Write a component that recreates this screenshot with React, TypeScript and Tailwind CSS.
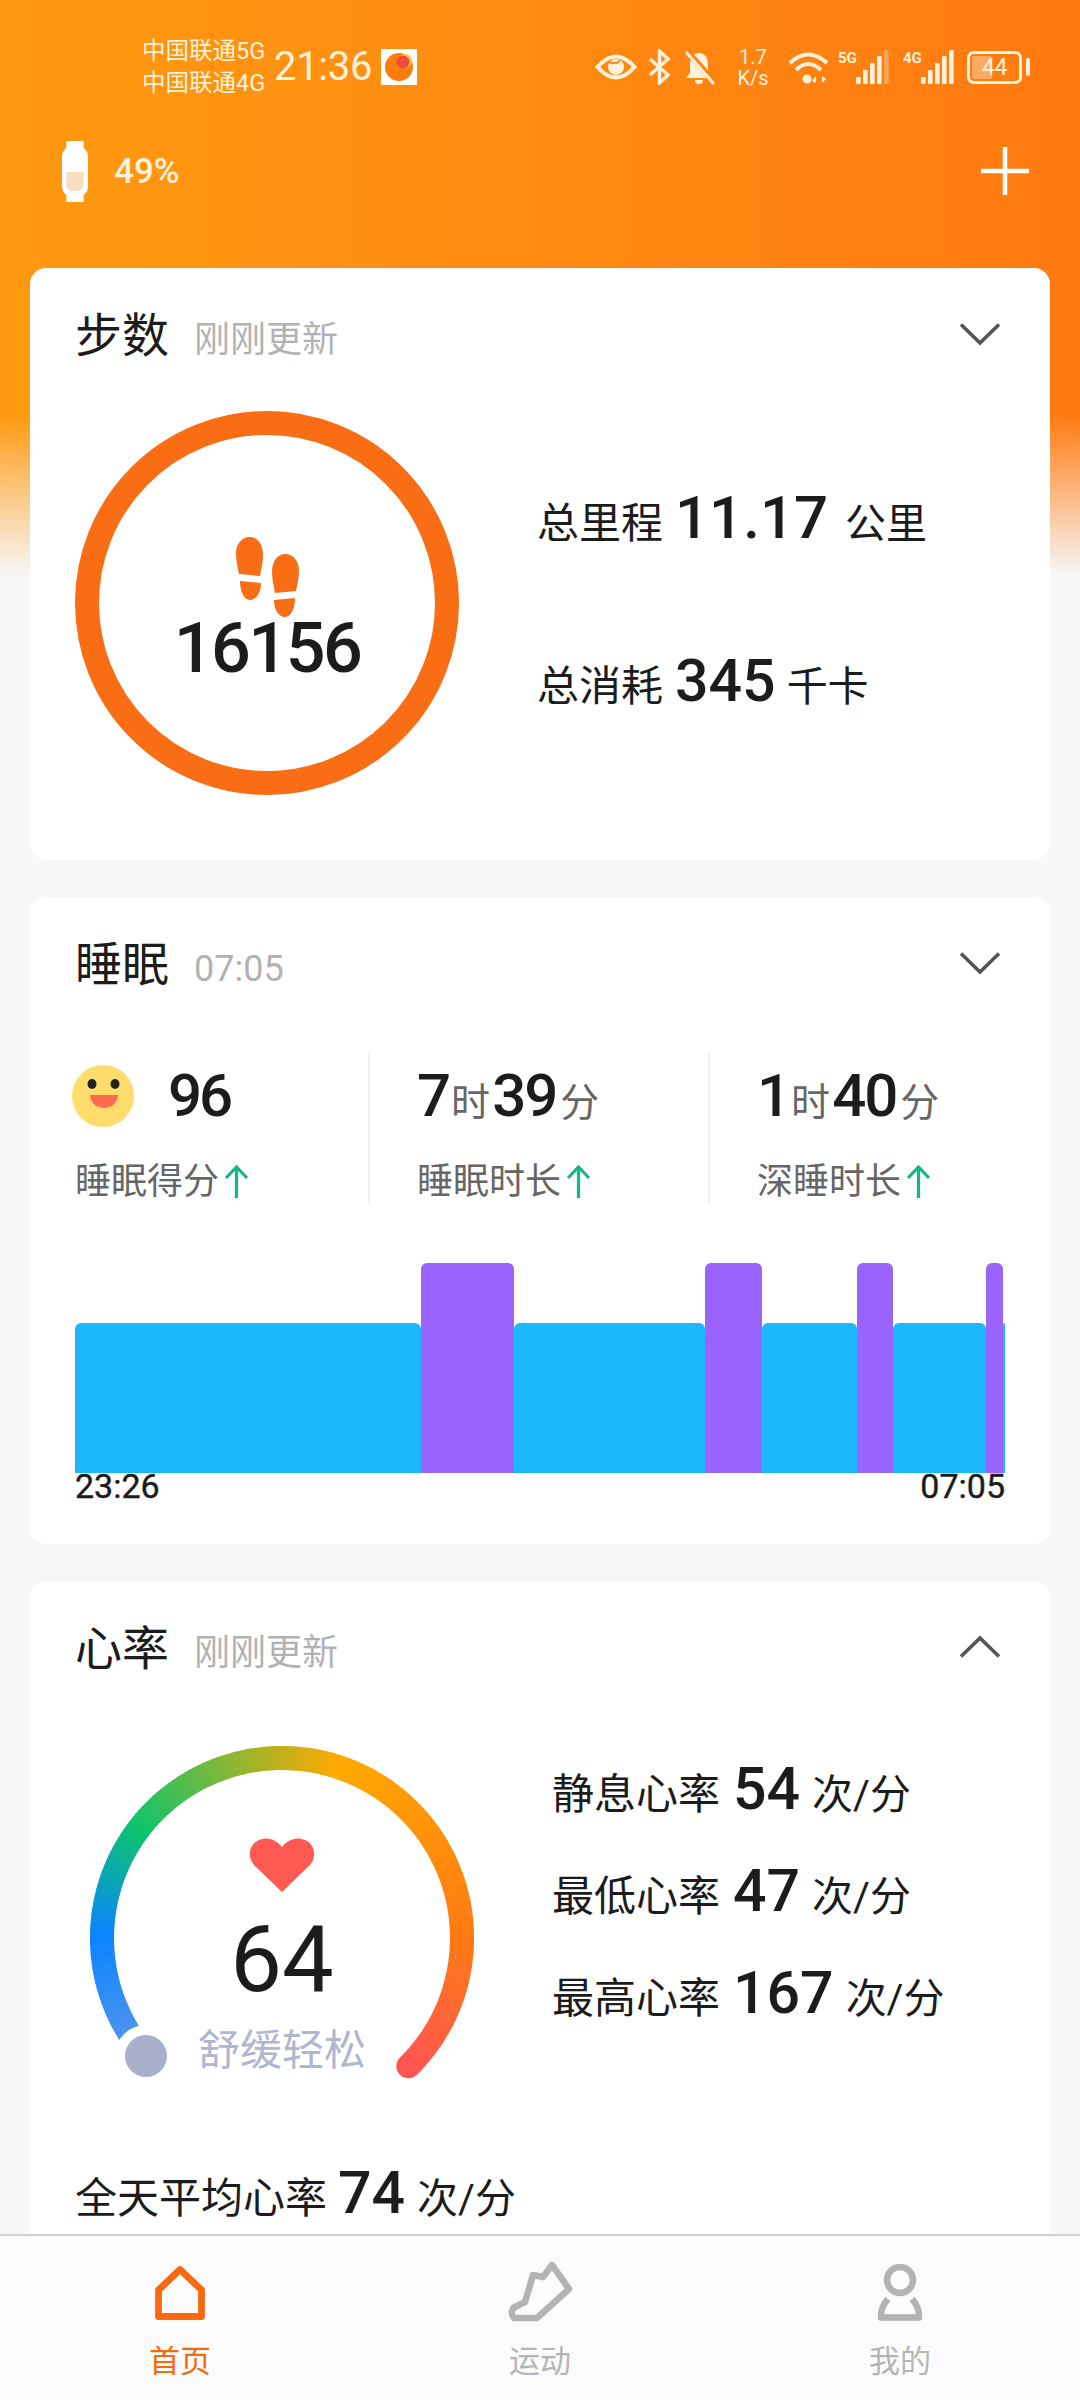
import type { ReactNode } from 'react';

const SLEEP_SEGMENTS = [
  { kind: 'light', size: 'w-[346px]' },
  { kind: 'deep', size: 'w-[93px]' },
  { kind: 'light', size: 'w-[191px]' },
  { kind: 'deep', size: 'w-[57px]' },
  { kind: 'light', size: 'w-[95px]' },
  { kind: 'deep', size: 'w-[36px]' },
  { kind: 'light', size: 'w-[93px]' },
  { kind: 'deep', size: 'w-[17px]' },
  { kind: 'light', size: 'w-[2px]' },
];

const GAUGE_STOPS: [number, number[]][] = [
  [-131, [90, 152, 232]],
  [-90, [10, 132, 255]],
  [-54, [12, 196, 110]],
  [17, [255, 170, 0]],
  [90, [255, 122, 20]],
  [135.4, [255, 85, 82]],
];

function gaugeColor(angle: number) {
  for (let i = 1; i < GAUGE_STOPS.length; i++) {
    const [a1, c1] = GAUGE_STOPS[i - 1];
    const [a2, c2] = GAUGE_STOPS[i];
    if (angle <= a2) {
      const t = (angle - a1) / (a2 - a1);
      const mix = c1.map((v, n) => Math.round(v + (c2[n] - v) * t));
      return `rgb(${mix.join(',')})`;
    }
  }
  return 'rgb(255,85,82)';
}

function polar(angle: number, r = 180) {
  const rad = (angle * Math.PI) / 180;
  return { x: 210 + r * Math.sin(rad), y: 208 - r * Math.cos(rad) };
}

function Gauge() {
  const parts = [];
  for (let a = -131; a < 135; a += 1.5) {
    const from = polar(a);
    const to = polar(Math.min(a + 2, 135.4));
    parts.push(
      <path
        key={a}
        d={`M${from.x} ${from.y} A180 180 0 0 1 ${to.x} ${to.y}`}
        stroke={gaugeColor(a)}
        strokeWidth="24"
        fill="none"
      />,
    );
  }
  const end = polar(135.4);
  return (
    <svg width="420" height="350" viewBox="0 0 420 350" className="block">
      {parts}
      <circle cx={end.x} cy={end.y} r="12" fill="#ff5552" />
      <circle cx="74" cy="326" r="31" fill="#fff" />
      <circle cx="74" cy="326" r="21" fill="#a8afca" />
    </svg>
  );
}

function Chevron({ up }: { up?: boolean }) {
  return (
    <svg width="44" height="26" viewBox="0 0 44 26" fill="none" className={up ? 'rotate-180' : ''}>
      <path d="M3 3.5 L22 22 L41 3.5" stroke="#555" strokeWidth="3.6" />
    </svg>
  );
}

function CardHeader({ title, note, up }: { title: string; note: string; up?: boolean }) {
  return (
    <div className="mt-[27px] flex h-[80px] items-center pl-[45px] pr-[48px]">
      <span className="text-[47px] leading-none text-[#1c1c1c]">{title}</span>
      <span className="ml-[25px] mt-[10px] text-[36px] leading-none text-[#b2b2b2]">{note}</span>
      <span className="ml-auto -mt-[3px]">
        <Chevron up={up} />
      </span>
    </div>
  );
}

function Stat({
  label,
  value,
  unit,
  valueGap,
  unitGap,
  large,
}: {
  label: string;
  value: string;
  unit: string;
  valueGap: string;
  unitGap: string;
  large?: boolean;
}) {
  return (
    <div className="flex h-[60px] items-baseline text-[#1c1c1c]">
      <span className="text-[42px] leading-[60px]">{label}</span>
      <span className={`${valueGap} ${large ? 'text-[60px]' : 'text-[59px]'} font-medium leading-[60px]`}>{value}</span>
      <span className={`${unitGap} text-[41px] leading-[60px]`}>{unit}</span>
    </div>
  );
}

function UpArrow() {
  return (
    <svg width="25" height="33" viewBox="0 0 25 33" fill="none" className="ml-[5px]">
      <path d="M12.5 33 V2 M2 13 L12.5 2 L23 13" stroke="#12b886" strokeWidth="3.2" />
    </svg>
  );
}

function Duration({ h, m }: { h: string; m: string }) {
  return (
    <div className="flex h-[60px] items-baseline text-[#1c1c1c]">
      <span className="text-[60px] font-medium leading-[60px] tracking-[-2px]">{h}</span>
      <span className="mx-[2px] text-[39px] leading-[60px] text-[#666]">时</span>
      <span className="text-[60px] font-medium leading-[60px] tracking-[-2px]">{m}</span>
      <span className="ml-[4px] text-[39px] leading-[60px] text-[#666]">分</span>
    </div>
  );
}

function Metric({ label, border, children }: { label: string; border?: boolean; children: ReactNode }) {
  return (
    <div className={`flex h-[150px] flex-col pt-[13px] ${border ? 'border-r-2 border-[#efefef]' : ''}`}>
      {children}
      <div className="mt-[34px] flex h-[44px] items-center">
        <span className="text-[36px] leading-none text-[#666]">{label}</span>
        <UpArrow />
      </div>
    </div>
  );
}

function Footprints() {
  const sole = 'M13.5 0 C22 0 27 8 27 18 C27 26 25 33 24 39 L3 37 C1.5 30 0 24 0 16 C0 7 6 0 13.5 0Z';
  const heel = 'M4 44 L25 46 C25 56 20 63 14 63 C8 63 4 54 4 44Z';
  return (
    <svg width="63" height="80" viewBox="0 0 63 80" fill="#f96d15">
      <path d={sole} />
      <path d={heel} />
      <g transform="translate(63 17) scale(-1 1)">
        <path d={sole} />
        <path d={heel} />
      </g>
    </svg>
  );
}

function Signal({ label, lastFaded }: { label: string; lastFaded?: boolean }) {
  const bars = [
    { x: 0, h: 7 },
    { x: 7, h: 14 },
    { x: 14, h: 21 },
    { x: 21, h: 28 },
    { x: 28, h: 34 },
  ];
  return (
    <div className="flex items-start">
      <span className="w-[17px] text-[15px] font-bold leading-[16px] text-[#fff2dc]">{label}</span>
      <svg width="33" height="34" viewBox="0 0 33 34" fill="#fff2dc" className="ml-[1px]">
        {bars.map((b, i) => (
          <rect
            key={b.x}
            x={b.x}
            y={34 - b.h}
            width="4.6"
            height={b.h}
            rx="1"
            opacity={lastFaded && i === 4 ? 0.35 : 1}
          />
        ))}
      </svg>
    </div>
  );
}

function StatusBar() {
  return (
    <div className="flex h-[134px] items-center pl-[142px] pr-[50px] text-[#fff2dc]">
      <div className="w-[125px] whitespace-nowrap text-[23.500px] leading-[32px] text-[#fff2dc]">
        <div>中国联通5G</div>
        <div>中国联通4G</div>
      </div>
      <span className="ml-[7px] text-[40px] leading-none tracking-[-0.300px]">21:36</span>
      <div className="ml-[9px] flex h-[36px] w-[36px] items-center justify-center bg-white">
        <svg width="30" height="30" viewBox="0 0 30 30">
          <circle cx="15" cy="15" r="14" fill="#fb7d10" />
          <circle cx="21" cy="9" r="7" fill="#fbc12e" />
          <circle cx="19" cy="10" r="6.5" fill="#ef4b3f" />
        </svg>
      </div>

      <div className="ml-auto flex items-center">
        <svg width="42" height="26" viewBox="0 0 42 26" fill="none">
          <path d="M2.5 13 Q21 -8 39.500 13 Q21 34 2.500 13Z" stroke="#fff2dc" strokeWidth="4" />
          <circle cx="21" cy="13" r="8" fill="#fff2dc" />
          <path d="M14 8 Q20 11 25 7" stroke="#ff8410" strokeWidth="2" />
        </svg>
        <svg width="23" height="36" viewBox="0 0 23 36" fill="none" className="ml-[11px]">
          <path d="M2 10 L20 26 L11.500 34 V2 L20 10 L2 26" stroke="#fff2dc" strokeWidth="3.4" />
        </svg>
        <svg width="33" height="35" viewBox="0 0 33 35" className="ml-[12px]">
          <path d="M16 3 C9 3 7 9 7 15 V23 L3 28 H29 L25 23 V15 C25 9 23 3 16 3Z" fill="#fff2dc" />
          <path d="M12 30 a4 4 0 0 0 8 0Z" fill="#fff2dc" />
          <path d="M4 1 L32 33" stroke="#ff8410" strokeWidth="6" />
          <path d="M3 2 L31 34" stroke="#fff2dc" strokeWidth="3" />
        </svg>
        <div className="ml-[19px] flex w-[36px] flex-col items-center gap-[1px] text-[20px] leading-[20px]">
          <div>1.7</div>
          <div>K/s</div>
        </div>
        <svg width="41" height="34" viewBox="0 0 41 34" fill="none" className="ml-[17px]">
          <path d="M2 13 Q20 -4 39 13" stroke="#fff2dc" strokeWidth="4" />
          <path d="M8 20 Q20 8 33 20" stroke="#fff2dc" strokeWidth="4" />
          <circle cx="19" cy="29" r="4.500" fill="#fff2dc" />
          <path d="M28 33 L28 26 L24 31Z M34 26 L34 33 L38 29Z" fill="#fff2dc" />
        </svg>
        <div className="ml-[9px]">
          <Signal label="5G" lastFaded />
        </div>
        <div className="ml-[14px]">
          <Signal label="4G" />
        </div>
        <div className="relative ml-[13px] flex h-[33px] w-[55px] items-center justify-center overflow-hidden rounded-[7px] border-[3px] border-[#fff2dc]">
          <span className="absolute bottom-[2px] left-[2px] top-[2px] w-[20px] rounded-[2px] bg-white/35" />
          <span className="relative text-[23px] leading-none tracking-[-0.5px]">44</span>
        </div>
        <span className="ml-[4px] h-[18px] w-[4px] rounded-[2px] bg-[#fff2dc]" />
      </div>
    </div>
  );
}

function TabItem({ label, active, children }: { label: string; active?: boolean; children: ReactNode }) {
  return (
    <div className="flex flex-1 flex-col items-center pt-[25px]">
      <div className="flex h-[62px] items-center justify-center">{children}</div>
      <span className={`mt-[17px] text-[31px] leading-[44px] ${active ? 'text-[#f36a10]' : 'text-[#b5b5b5]'}`}>{label}</span>
    </div>
  );
}

export default function App() {
  return (
    <div className="flex h-[2400px] w-[1080px] flex-col overflow-hidden bg-[#f7f7f7] bg-[linear-gradient(to_bottom,transparent_415px,#f7f7f7_575px),linear-gradient(to_right,#ff9a10,#ff7a10)] [font-family:Roboto,'Noto_Sans_CJK_SC',sans-serif]">
      <StatusBar />

      <div className="flex h-[74px] items-center pl-[62px] pr-[50px]">
        <svg width="26" height="61" viewBox="0 0 24 61" preserveAspectRatio="none">
          <path d="M4 0 H20 V7 Q24 10 24 16 V45 Q24 51 20 54 V61 H4 V54 Q0 51 0 45 V16 Q0 10 4 7Z" fill="#fff" />
          <path d="M4 31 H20 V44 Q20 50 12 50 Q4 50 4 44Z" fill="#f7dcc0" />
        </svg>
        <span className="ml-[26px] text-[35px] font-medium leading-none text-[#fff2dc]">49%</span>
        <svg width="50" height="50" viewBox="0 0 50 50" className="ml-auto" fill="none">
          <path d="M25 1 V49 M1 25 H49" stroke="#fff" strokeWidth="4.500" />
        </svg>
      </div>

      <div className="mt-[60px] flex min-h-0 flex-1 flex-col gap-[37px] overflow-hidden px-[30px]">
        <section className="h-[592px] shrink-0 overflow-hidden rounded-[16px] bg-white">
          <CardHeader title="步数" note="刚刚更新" />
          <div className="mt-[36px] flex pl-[45px]">
            <div className="flex h-[384px] w-[384px] flex-col items-center rounded-full border-[24px] border-[#f96d15] pt-[102px]">
              <Footprints />
              <span className="mt-[-4px] text-[70px] font-medium leading-[70px] tracking-[-2.500px] text-[#1c1c1c]">16156</span>
            </div>
            <div className="ml-[78px] flex flex-col gap-[103px] pt-[77px]">
              <Stat label="总里程" value="11.17" unit="公里" valueGap="ml-[12px]" unitGap="ml-[17px]" large />
              <Stat label="总消耗" value="345" unit="千卡" valueGap="ml-[12px]" unitGap="ml-[11px]" />
            </div>
          </div>
        </section>

        <section className="h-[647px] shrink-0 overflow-hidden rounded-[16px] bg-white">
          <CardHeader title="睡眠" note="07:05" />
          <div className="mt-[49px] grid grid-cols-[340px_340px_1fr]">
            <div className="pl-[45px]">
              <Metric label="睡眠得分" border>
                <div className="flex h-[60px] items-center">
                  <svg width="62" height="62" viewBox="0 0 62 62" className="-ml-[3px]">
                    <circle cx="31" cy="31" r="31" fill="#ffdc6b" />
                    <ellipse cx="20" cy="19" rx="4.500" ry="5" fill="#222" />
                    <ellipse cx="43" cy="19" rx="4.500" ry="5" fill="#222" />
                    <path d="M18 30 H46 Q45 42 32 43 Q19 42 18 30Z" fill="#ff6a50" />
                  </svg>
                  <span className="ml-[34px] text-[60px] font-medium leading-[60px] tracking-[-3px] text-[#1c1c1c]">96</span>
                </div>
              </Metric>
            </div>
            <div className="pl-[47px]">
              <Metric label="睡眠时长" border>
                <Duration h="7" m="39" />
              </Metric>
            </div>
            <div className="pl-[47px]">
              <Metric label="深睡时长">
                <Duration h="1" m="40" />
              </Metric>
            </div>
          </div>
          <div className="mt-[60px] flex h-[210px] items-end pl-[45px]">
            {SLEEP_SEGMENTS.map((seg, i) => (
              <div
                key={i}
                className={`${seg.size} rounded-t-[6px] ${seg.kind === 'deep' ? 'h-[210px] bg-[#9b63fd]' : 'h-[150px] bg-[#1cb9fa]'}`}
              />
            ))}
          </div>
          <div className="flex h-[26px] items-center justify-between pl-[45px] pr-[45px] text-[34px] text-[#1c1c1c] [-webkit-text-stroke:0.4px_#1c1c1c]">
            <span>23:26</span>
            <span>07:05</span>
          </div>
        </section>

        <section className="flex-1 overflow-hidden rounded-t-[16px] bg-white">
          <CardHeader title="心率" note="刚刚更新" up />
          <div className="mt-[42px] flex pl-[42px]">
            <div className="relative h-[350px] w-[420px]">
              <Gauge />
              <div className="absolute inset-0 flex flex-col items-center pt-[108px]">
                <svg width="66" height="54" viewBox="0 0 66 54" fill="#ff5a52">
                  <path d="M33 54 L5 27 C-2 19 0 6 10 2 C19 -2 28 2 33 9 C38 2 47 -2 56 2 C66 6 68 19 61 27Z" />
                </svg>
                <span className="mt-[23px] text-[92px] leading-[90px] text-[#1c1c1c]">64</span>
                <span className="mt-[21px] text-[42px] leading-[50px] text-[#b0b6d0]">舒缓轻松</span>
              </div>
            </div>
            <div className="ml-[60px] flex flex-col gap-[42px] pt-[29px]">
              <Stat label="静息心率" value="54" unit="次/分" valueGap="ml-[13px]" unitGap="ml-[12px]" />
              <Stat label="最低心率" value="47" unit="次/分" valueGap="ml-[13px]" unitGap="ml-[12px]" />
              <Stat label="最高心率" value="167" unit="次/分" valueGap="ml-[13px]" unitGap="ml-[12px]" />
            </div>
          </div>
          <div className="mt-[83px] pl-[45px]">
            <Stat label="全天平均心率" value="74" unit="次/分" valueGap="ml-[11px]" unitGap="ml-[12px]" />
          </div>
        </section>
      </div>

      <nav className="flex h-[166px] shrink-0 border-t-2 border-[#d0d0d0] bg-[#fbfbfb]">
        <TabItem label="首页" active>
          <svg width="50" height="55" viewBox="0 0 50 55" fill="none">
            <path d="M25 4.500 L46.500 25 V51.500 H3.500 V25 Z" stroke="#f96a10" strokeWidth="6.800" strokeLinejoin="round" />
          </svg>
        </TabItem>
        <TabItem label="运动">
          <svg width="68" height="62" viewBox="0 0 68 62" fill="none">
            <path
              d="M37 16 L46 4 L63 28 L31 57 L8 57 Q5 53 6 50 Q7 46 11 45 L19 41 L27 14 L37 16"
              stroke="#b3b3b3"
              strokeWidth="6.500"
              strokeLinejoin="round"
              strokeLinecap="round"
            />
          </svg>
        </TabItem>
        <TabItem label="我的">
          <svg width="46" height="57" viewBox="0 0 46 57" fill="none">
            <circle cx="23" cy="16" r="13" stroke="#b3b3b3" strokeWidth="6.500" />
            <path d="M11 35 Q3.500 43 4 53.500 H42 Q42.500 43 35 35" stroke="#b3b3b3" strokeWidth="6.500" strokeLinejoin="round" />
          </svg>
        </TabItem>
      </nav>
    </div>
  );
}
